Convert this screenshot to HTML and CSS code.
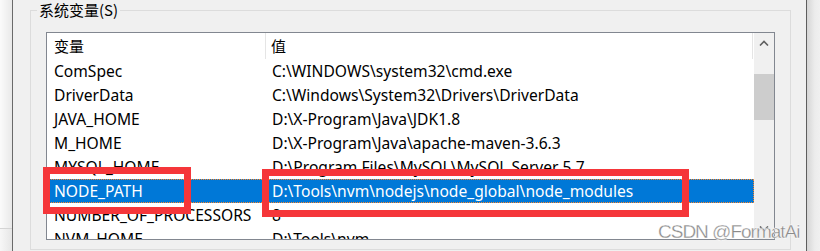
FILE: index.html
```html
<!DOCTYPE html>
<html lang="zh">
<head>
<meta charset="utf-8">
<title>系统变量</title>
<link rel="stylesheet" href="styles.css">
</head>
<body>
<div class="window">
  <div class="frame-left"><div class="frame-left-top"></div><div class="frame-left-bottom"></div></div>
  <div class="main">
    <fieldset class="group">
      <legend class="group-title">系统变量(S)</legend>
      <div class="listbox">
        <div class="list-main">
          <div class="list-header">
            <div class="hcell">变量</div>
            <div class="hcell hcell-value">值</div>
          </div>
          <div class="row"><div class="cell">ComSpec</div><div class="cell val">C:\WINDOWS\system32\cmd.exe</div></div>
          <div class="row"><div class="cell">DriverData</div><div class="cell val">C:\Windows\System32\Drivers\DriverData</div></div>
          <div class="row"><div class="cell">JAVA_HOME</div><div class="cell val">D:\X-Program\Java\JDK1.8</div></div>
          <div class="row"><div class="cell">M_HOME</div><div class="cell val">D:\X-Program\Java\apache-maven-3.6.3</div></div>
          <div class="row"><div class="cell">MYSQL_HOME</div><div class="cell val">D:\Program Files\MySQL\MySQL Server 5.7</div></div>
          <div class="row selected"><div class="cell">NODE_PATH</div><div class="cell val">D:\Tools\nvm\nodejs\node_global\node_modules</div></div>
          <div class="row"><div class="cell">NUMBER_OF_PROCESSORS</div><div class="cell val">8</div></div>
          <div class="row"><div class="cell">NVM_HOME</div><div class="cell val">D:\Tools\nvm</div></div>
        </div>
        <div class="scrollbar">
          <div class="sb-btn">
            <svg width="10" height="6" viewBox="0 0 10 6"><path d="M1 5.5 L5 1.5 L9 5.5" fill="none" stroke="#606060" stroke-width="1.6"/></svg>
          </div>
          <div class="sb-track-top"></div>
          <div class="sb-thumb"></div>
          <div class="sb-track"></div>
          <div class="sb-btn">
            <svg width="10" height="6" viewBox="0 0 10 6"><path d="M1 0.5 L5 4.5 L9 0.5" fill="none" stroke="#606060" stroke-width="1.6"/></svg>
          </div>
        </div>
      </div>
    </fieldset>
  </div>
  <div class="frame-right"></div>
</div>
<div class="mark mark-name"></div>
<div class="mark mark-value"></div>
<div class="watermark">CSDN @FormatAi</div>
</body>
</html>
```
FILE: styles.css
```css
html, body {
  margin: 0;
  padding: 0;
}
body {
  width: 820px;
  height: 251px;
  overflow: hidden;
  background: #f0f0f0;
  font-family: "Noto Sans", "Noto Sans CJK SC", sans-serif;
  font-size: 15.6px;
  color: #000;
  position: relative;
}
.window {
  display: flex;
  height: 251px;
  overflow: hidden;
}
.frame-left {
  width: 12px;
  border-right: 1px solid #6a6a6a;
  display: flex;
  flex-direction: column;
}
.frame-left-top {
  height: 228px;
  background: linear-gradient(to right, #fbfbfb, #e9e9e9);
  border-bottom: 1px solid #d4d4d4;
}
.frame-left-bottom {
  flex: 1;
  background: linear-gradient(to right, #f7f7f7, #e6e6e6);
}
.main {
  flex: 1;
  min-width: 0;
  overflow: hidden;
}
.frame-right {
  width: 13px;
  border-left: 1px solid #5e5e5e;
  background: linear-gradient(to right, #d6d6d6, #ececec 60%, #f0f0f0);
}
.group {
  margin: 0 15px 0 17px;
  padding: 0 15px 0 6px;
  border: 1px solid #dcdcdc;
  min-width: 0;
  height: 250px;
  box-sizing: border-box;
}
.group-title {
  padding: 0 2px;
  line-height: 20px;
  font-size: 15px;
  font-family: "Noto Sans CJK SC", sans-serif;
}
.listbox {
  margin: 12px 0 0 9px;
  height: 208px;
  box-sizing: border-box;
  border: 1px solid #828790;
  background: #fff;
  display: flex;
  overflow: hidden;
}
.list-main {
  flex: 1;
  min-width: 0;
  overflow: hidden;
}
.list-header {
  display: grid;
  grid-template-columns: 218px 1fr;
  height: 26px;
  border-right: 1px solid #e5e5e5;
  margin-right: 1px;
}
.hcell {
  padding-left: 7px;
  line-height: 26px;
  font-family: "Noto Sans CJK SC", sans-serif;
  font-size: 15px;
}
.hcell-value {
  border-left: 1px solid #e5e5e5;
  padding-left: 5px;
}
.row {
  display: grid;
  grid-template-columns: 219px 1fr;
  height: 24px;
  line-height: 24px;
  white-space: nowrap;
}
.cell {
  padding-left: 7px;
  overflow: hidden;
}
.cell.val {
  padding-left: 6px;
}
.row.selected {
  background: #0078d7;
  color: #fff;
  outline: 1px dotted #ff8728;
  outline-offset: -1px;
}
.scrollbar {
  width: 20px;
  background: #f0f0f0;
  display: flex;
  flex-direction: column;
}
.sb-btn {
  height: 20px;
  display: flex;
  align-items: center;
  justify-content: center;
}
.sb-track-top {
  height: 21px;
}
.sb-thumb {
  height: 46px;
  background: #cdcdcd;
}
.sb-track {
  flex: 1;
}
.mark {
  position: absolute;
  border: 7px solid #f5363a;
  box-sizing: border-box;
}
.mark-name {
  left: 43px;
  top: 167px;
  width: 148px;
  height: 47px;
}
.mark-value {
  left: 262px;
  top: 169px;
  width: 427px;
  height: 48px;
}
.watermark {
  position: absolute;
  left: 658px;
  top: 221px;
  font-family: "Liberation Sans", sans-serif;
  font-size: 19px;
  letter-spacing: -1px;
  color: #8a8a8a;
  -webkit-text-stroke: 0.3px #ffffff;
  text-shadow: 0 0 1px #fff, 0 0 1px #fff;
  white-space: nowrap;
}
```
